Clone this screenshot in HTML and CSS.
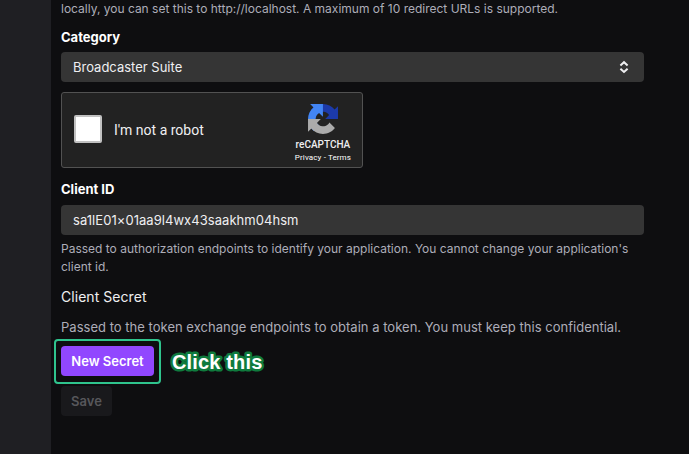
FILE: index.html
```html
<!DOCTYPE html>
<html lang="en">
<head>
<meta charset="utf-8">
<title>Application settings</title>
<link rel="stylesheet" href="styles.css">
</head>
<body>
<div class="page">
  <aside class="sidebar"></aside>
  <main class="form">
    <p class="help help-top">locally, you can set this to http://localhost. A maximum of 10 redirect URLs is supported.</p>
    <label class="label label-category">Category</label>
    <div class="field select">
      <span>Broadcaster Suite</span>
      <svg class="select-icon" viewBox="0 0 10 14"><path d="M1.4 5.4 5 2.2l3.6 3.2M1.4 8.8 5 12l3.6-3.2"/></svg>
    </div>
    <section class="captcha">
      <span class="checkbox"></span>
      <span class="robot">I'm not a robot</span>
      <div class="brand">
        <svg class="logo" viewBox="0 0 64 64">
          <path fill="#1c3aa9" d="M64 31.955l-.033-1.37V4.687l-7.16 7.16C50.948 4.674 42.033.093 32.05.093c-10.4 0-19.622 4.96-25.458 12.64l11.736 11.86a15.55 15.55 0 0 1 4.754-5.334c2.05-1.6 4.952-2.906 8.968-2.906.485 0 .86.057 1.135.163 4.976.393 9.288 3.14 11.828 7.124l-8.307 8.307L64 31.953"/>
          <path fill="#4285f4" d="M31.862.094l-1.37.033H4.594l7.16 7.16C4.58 13.147 0 22.06 0 32.046c0 10.4 4.96 19.622 12.64 25.458L24.5 45.768a15.55 15.55 0 0 1-5.334-4.754c-1.6-2.05-2.906-4.952-2.906-8.968 0-.485.057-.86.163-1.135.393-4.976 3.14-9.288 7.124-11.828l8.307 8.307L31.86.095"/>
          <path fill="#ababab" d="M.001 32.045l.033 1.37v25.898l7.16-7.16c5.86 7.173 14.774 11.754 24.76 11.754 10.4 0 19.622-4.96 25.458-12.64l-11.736-11.86a15.55 15.55 0 0 1-4.754 5.334c-2.05 1.6-4.952 2.906-8.968 2.906-.485 0-.86-.057-1.135-.163-4.976-.393-9.288-3.14-11.828-7.124l8.307-8.307c-10.522.04-22.4.066-27.295-.005"/>
        </svg>
        <span class="brand-name">reCAPTCHA</span>
        <span class="brand-links">Privacy - Terms</span>
      </div>
    </section>
    <label class="label label-id">Client ID</label>
    <div class="field client-id"><span>sa1lE01×01aa9l4wx43saakhm04hsm</span></div>
    <p class="help help-id">Passed to authorization endpoints to identify your application. You cannot change your application's<br>client id.</p>
    <h2 class="secret-title">Client Secret</h2>
    <p class="help help-secret">Passed to the token exchange endpoints to obtain a token. You must keep this confidential.</p>
    <div class="callout">
      <div class="highlight"><button class="button primary">New Secret</button></div>
      <svg class="note" width="110" height="32"><text x="8" y="23">Click this</text></svg>
    </div>
    <button class="button save" disabled>Save</button>
  </main>
</div>
</body>
</html>
```
FILE: styles.css
```css
* { box-sizing: border-box; }
body {
  margin: 0;
  background: #0e0e10;
  color: #efeff1;
  font-family: Inter, "Liberation Sans", sans-serif;
  font-size: 13px;
  overflow: hidden;
}
.page { display: flex; width: 689px; height: 454px; }
.sidebar { flex: none; width: 51px; background: #1f1f23; }
.form {
  display: flex;
  flex-direction: column;
  align-items: flex-start;
  width: 593px;
  padding-left: 10px;
}
.help { margin: 0; font-size: 12px; line-height: 18px; color: #adadb8; white-space: nowrap; }
.help-top { height: 18px; }
.label { font-size: 13px; font-weight: 700; line-height: 20px; color: #fff; }
.label-category { margin: 9px 0 5px; }
.field {
  display: flex;
  align-items: center;
  justify-content: space-between;
  width: 583px;
  height: 30px;
  padding: 0 15px 0 12px;
  border-radius: 4px;
  background: #353535;
  font-size: 13px;
}
.client-id { letter-spacing: .05px; }
.select-icon { width: 10px; height: 14px; fill: none; stroke: #efeff1; stroke-width: 2; }
.captcha {
  display: flex;
  align-items: center;
  width: 302px;
  height: 76px;
  margin-top: 10px;
  padding: 0 11px 0 12px;
  border: 1px solid #525252;
  border-radius: 3px;
  background: #222;
  font-family: Roboto, sans-serif;
}
.checkbox { width: 28px; height: 28px; margin-bottom: 2px; border: 2px solid #c1c1c1; border-radius: 2px; background: #fff; }
.robot { margin-left: 12px; font-size: 14px; line-height: 18px; }
.brand { display: flex; flex-direction: column; align-items: center; align-self: flex-start; margin: 11px 0 0 auto; white-space: nowrap; }
.logo { width: 30px; height: 30px; }
.brand-name { margin-top: 5px; font-size: 10px; font-weight: 500; line-height: 12px; }
.brand-links { margin-top: 2px; font-size: 8px; line-height: 10px; letter-spacing: .12px; color: #fff; }
.label-id { margin: 11px 0 6px; }
.help-id { margin-top: 5px; }
.secret-title { margin: 11px 0 0; font-size: 14px; font-weight: 400; line-height: 20px; letter-spacing: .05px; }
.help-secret { margin-top: 11px; font-size: 13px; letter-spacing: .02px; }
.callout { display: flex; align-items: center; margin: 3px 0 0 -7px; }
.highlight { width: 107px; height: 45px; padding: 5px; border: 2px solid #2fc48d; border-radius: 4px; }
.button {
  display: block;
  height: 30px;
  padding: 0;
  border: 0;
  border-radius: 4px;
  font: 600 13px/30px Inter, sans-serif;
  white-space: nowrap;
}
.primary { width: 93px; background: #9147ff; color: #fff; }
.save { width: 51px; margin-top: 2px; background: #19191c; color: #57575b; }
.note { margin-left: 3px; overflow: visible; }
.note text {
  fill: #fff;
  stroke: #0f7a3d;
  stroke-width: 5px;
  stroke-linejoin: round;
  paint-order: stroke;
  font: 700 20px "Liberation Sans", Arial, sans-serif;
  letter-spacing: .15px;
}
```
